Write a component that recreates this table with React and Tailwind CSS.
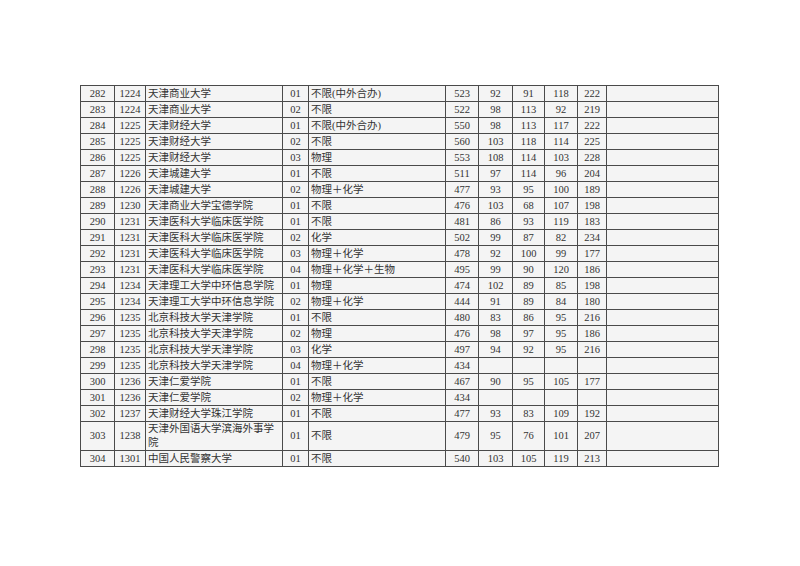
import React from "react";

const rows = [
  ["282", "1224", "天津商业大学", "01", "不限(中外合办)", "523", "92", "91", "118", "222"],
  ["283", "1224", "天津商业大学", "02", "不限", "522", "98", "113", "92", "219"],
  ["284", "1225", "天津财经大学", "01", "不限(中外合办)", "550", "98", "113", "117", "222"],
  ["285", "1225", "天津财经大学", "02", "不限", "560", "103", "118", "114", "225"],
  ["286", "1225", "天津财经大学", "03", "物理", "553", "108", "114", "103", "228"],
  ["287", "1226", "天津城建大学", "01", "不限", "511", "97", "114", "96", "204"],
  ["288", "1226", "天津城建大学", "02", "物理＋化学", "477", "93", "95", "100", "189"],
  ["289", "1230", "天津商业大学宝德学院", "01", "不限", "476", "103", "68", "107", "198"],
  ["290", "1231", "天津医科大学临床医学院", "01", "不限", "481", "86", "93", "119", "183"],
  ["291", "1231", "天津医科大学临床医学院", "02", "化学", "502", "99", "87", "82", "234"],
  ["292", "1231", "天津医科大学临床医学院", "03", "物理＋化学", "478", "92", "100", "99", "177"],
  ["293", "1231", "天津医科大学临床医学院", "04", "物理＋化学＋生物", "495", "99", "90", "120", "186"],
  ["294", "1234", "天津理工大学中环信息学院", "01", "物理", "474", "102", "89", "85", "198"],
  ["295", "1234", "天津理工大学中环信息学院", "02", "物理＋化学", "444", "91", "89", "84", "180"],
  ["296", "1235", "北京科技大学天津学院", "01", "不限", "480", "83", "86", "95", "216"],
  ["297", "1235", "北京科技大学天津学院", "02", "物理", "476", "98", "97", "95", "186"],
  ["298", "1235", "北京科技大学天津学院", "03", "化学", "497", "94", "92", "95", "216"],
  ["299", "1235", "北京科技大学天津学院", "04", "物理＋化学", "434", "", "", "", ""],
  ["300", "1236", "天津仁爱学院", "01", "不限", "467", "90", "95", "105", "177"],
  ["301", "1236", "天津仁爱学院", "02", "物理＋化学", "434", "", "", "", ""],
  ["302", "1237", "天津财经大学珠江学院", "01", "不限", "477", "93", "83", "109", "192"],
  ["303", "1238", "天津外国语大学滨海外事学院", "01", "不限", "479", "95", "76", "101", "207"],
  ["304", "1301", "中国人民警察大学", "01", "不限", "540", "103", "105", "119", "213"],
];

const cell = "border border-[#4a4a4a] px-0 py-0 leading-[14px] align-middle";

export default function App() {
  return (
    <div className="w-[800px] h-[566px] bg-white pt-[85px] pl-[80px] font-['Liberation_Serif','Noto_Sans_CJK_SC',serif] text-[10.5px] text-[#333]">
      <table className="border-collapse table-fixed w-[638px] bg-[#f4f4f4]">
        <colgroup>
          <col className="w-[34px]" />
          <col className="w-[31px]" />
          <col className="w-[137px]" />
          <col className="w-[26px]" />
          <col className="w-[137px]" />
          <col className="w-[33px]" />
          <col className="w-[34px]" />
          <col className="w-[32px]" />
          <col className="w-[33px]" />
          <col className="w-[29px]" />
          <col className="w-[112px]" />
        </colgroup>
        <tbody>
          {rows.map((r) => (
            <tr key={r[0]} className="h-[16px]">
              <td className={`${cell} text-center`}>{r[0]}</td>
              <td className={`${cell} text-center`}>{r[1]}</td>
              <td className={`${cell} text-left pl-[2px]`}>{r[2]}</td>
              <td className={`${cell} text-center`}>{r[3]}</td>
              <td className={`${cell} text-left pl-[2px]`}>{r[4]}</td>
              <td className={`${cell} text-center`}>{r[5]}</td>
              <td className={`${cell} text-center`}>{r[6]}</td>
              <td className={`${cell} text-center`}>{r[7]}</td>
              <td className={`${cell} text-center`}>{r[8]}</td>
              <td className={`${cell} text-center`}>{r[9]}</td>
              <td className={cell}></td>
            </tr>
          ))}
        </tbody>
      </table>
    </div>
  );
}
